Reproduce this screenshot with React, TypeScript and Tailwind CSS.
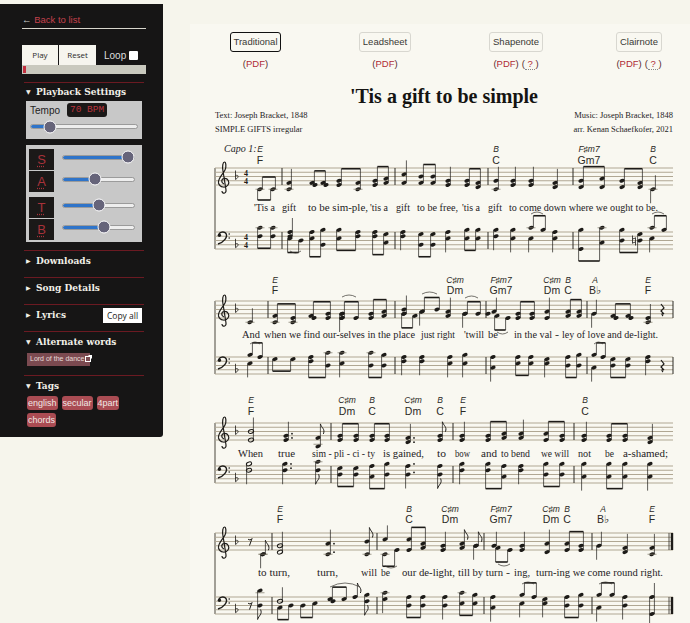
import React from 'react'

// quarter: [x, steps, stem, mods] mods: h half, . dotted, f flag
type Q = [number, number[], string, string?]
// beamed pair: [x1, steps1, x2, steps2, stem]
type P = [number, number[], number, number[], string]

interface Staff {
  t: number
  q: Q[]
  p: P[]
  bars: number[]
  rests?: [number, string][]
  natural?: [number, number][]
}

interface System {
  treble: Staff
  bass: Staff
  chordY: [number, number]
  chords: [number, string, string][]
  lyricY: number
  lyrics: [number, string, number][]
  slurs: [number, number, number, number][]
  end?: boolean
  final?: boolean
  time?: boolean
}

const systems: System[] = [
  {
    treble: {
      t: 168,
      bars: [282, 395, 488, 573],
      q: [[289, [7, 10], 'u'], [404, [3, 7], 'u'], [448, [6, 8], 'u'], [496, [6, 10], 'u'], [513, [6, 8], 'u'], [531, [6, 8], 'u'], [555, [7, 9], 'u'], [653, [10], 'b']],
      p: [[260, [10], 273, [10], 'b'], [312, [7, 8], 323, [7, 8], 'u'], [339, [6, 8], 358, [7, 10], 'u'], [375, [6, 8], 386, [5, 7], 'u'], [421, [4, 7], 433, [4, 7], 'u'], [467, [6, 8], 478, [7, 9], 'u'], [581, [6, 9], 602, [5, 9], 'u'], [622, [6, 9], 640, [7, 9], 'u']],
    },
    bass: {
      t: 232,
      bars: [282, 395, 488, 573],
      q: [[290, [0, 2], 'u'], [403, [0, 2], 'd'], [448, [0, 3], 'd'], [496, [-1, 2], 'd'], [513, [-1, 3], 'd'], [531, [3], 'd'], [555, [0, 3], 'd'], [652, [3], 'd']],
      p: [[260, [-2, 2], 273, [-2, 2], 'd'], [290, [3], 301, [4], 'd'], [312, [0, 3], 323, [-1, 6], 'd'], [339, [-1, 3], 358, [0, 2], 'd'], [375, [0, 2], 386, [1, 5], 'd'], [421, [1, 6], 433, [1, 6], 'd'], [467, [-1, 3], 478, [-1, 3], 'd'], [531, [-2], 543, [-1], 'u'], [581, [-1, 8], 602, [-2, 5], 'd'], [622, [-1, 4], 640, [1, 4], 'd'], [652, [-2], 664, [-1], 'u']],
      natural: [[634, 4]],
    },
    chordY: [152, 164],
    chords: [[260, 'E', 'F'], [496, 'B', 'C'], [589, 'F♯m7', 'Gm7'], [653, 'B', 'C']],
    lyricY: 211,
    lyrics: [[254, "'Tis a", 21], [282, 'gift', 14], [308, 'to be sim-ple,', 60], [370, "'tis a", 18], [396, 'gift', 14], [417, 'to be free,', 41], [462, "'tis a", 18], [488, 'gift', 14], [509, 'to come down where we ought to be.', 149]],
    slurs: [[290, 301, 251, 4], [531, 543, 214, -4], [652, 664, 214, -4]],
    time: true,
  },
  {
    treble: {
      t: 301,
      bars: [268, 395, 486, 587],
      rests: [[662, 'q']],
      q: [[250, [10], 'u'], [342, [6, 8], 'd'], [404, [4, 6], 'u'], [422, [5], 'd'], [448, [5, 7], 'u'], [465, [6], 'd'], [488, [6], ''], [494, [5], 'u'], [547, [5, 8], 'u'], [594, [6], 'b'], [648, [8, 10], 'u']],
      p: [[275, [7, 10], 293, [8, 10], 'u'], [311, [7, 8], 328, [6, 8], 'u'], [342, [6, 8], 356, [8], 'u'], [371, [6, 8], 384, [5, 7], 'u'], [404, [6], 415, [7], 'd'], [422, [5], 437, [4], 'u'], [465, [6], 478, [6], 'u'], [497, [7], 508, [8], 'd'], [518, [6, 8], 532, [6, 8], 'u'], [568, [5, 7], 579, [5, 7], 'u'], [613, [7, 8], 628, [7, 8], 'u']],
    },
    bass: {
      t: 357,
      bars: [268, 395, 486, 587],
      rests: [[662, 'q']],
      q: [[250, [3], 'd'], [342, [-2, 3], 'd'], [404, [0, 2], 'd'], [422, [0, 2], 'd'], [450, [0, 3], 'd'], [465, [-1, 3], 'd'], [493, [0, 5], 'd'], [547, [1, 3], 'd'], [594, [5], 'd'], [648, [0, 2], 'd']],
      p: [[250, [-1], 260, [0], 'u'], [275, [1], 293, [1], 'd'], [311, [0, 2], 328, [-2, 4], 'd'], [371, [-2, 4], 384, [-1, 4], 'd'], [518, [0, 3], 531, [0, 3], 'd'], [568, [0, 4], 579, [-1, 4], 'd'], [594, [-1], 603, [0], 'u'], [613, [1, 4], 628, [1, 4], 'd']],
    },
    chordY: [283, 294],
    chords: [[275, 'E', 'F'], [455, 'C♯m', 'Dm'], [501, 'F♯m7', 'Gm7'], [552, 'C♯m', 'Dm'], [568, 'B', 'C'], [595, 'A', 'B♭'], [648, 'E', 'F']],
    lyricY: 338,
    lyrics: [[242, 'And', 18], [264, 'when we find our-selves in the place', 151], [421, 'just right', 34], [464, "'twill", 20], [488, 'be', 10], [514, 'in the val', 38], [555, '-', 4], [562, 'ley of love and de-light.', 96]],
    slurs: [[342, 356, 297, -4], [422, 437, 294, -4], [465, 478, 298, -4], [497, 508, 332, 4], [250, 260, 344, -4], [594, 603, 344, -4]],
    end: true,
  },
  {
    treble: {
      t: 423,
      bars: [331, 453, 574],
      q: [[251, [4, 8], 'u', 'h'], [286, [6, 8], 'u', '.'], [318, [7, 11], 'u', 'f'], [408, [7, 9], 'u', '.'], [440, [6, 8], 'u', 'f'], [462, [6, 8], 'u'], [521, [5, 7], 'u'], [584, [6, 8], 'u'], [650, [7, 9], 'u']],
      p: [[340, [6, 8], 356, [6, 8], 'u'], [372, [6, 8], 387, [6, 8], 'u'], [488, [6, 8], 504, [5, 7], 'u'], [546, [5, 8], 562, [6, 8], 'u'], [609, [6, 8], 625, [6, 8], 'u']],
    },
    bass: {
      t: 466,
      bars: [331, 453, 574],
      q: [[249, [-1, 2], 'd', 'h'], [285, [-1, 2], 'd', '.'], [318, [-2, 2], 'd', 'f'], [408, [0, 4], 'd', '.'], [440, [0, 4], 'd', 'f'], [462, [-1, 2], 'd'], [521, [0, 2], 'd'], [584, [-1, 5], 'd'], [650, [-1, 5], 'd']],
      p: [[340, [1, 4], 356, [1, 4], 'd'], [372, [0, 5], 387, [-1, 4], 'd'], [488, [-1, 2], 504, [0, 5], 'd'], [546, [-1, 4], 562, [-1, 4], 'd'], [609, [-1, 5], 625, [-1, 5], 'd']],
    },
    chordY: [403, 415],
    chords: [[251, 'E', 'F'], [347, 'C♯m', 'Dm'], [372, 'B', 'C'], [413, 'C♯m', 'Dm'], [440, 'B', 'C'], [463, 'E', 'F'], [585, 'B', 'C']],
    lyricY: 457,
    lyrics: [[238, 'When', 25], [278, 'true', 17], [312, 'sim - pli - ci - ty', 63], [383, 'is gained,', 41], [437, 'to', 9], [455, 'bow', 15], [481, 'and', 16], [501, 'to bend', 29], [541, 'we will', 28], [578, 'not', 13], [605, 'be', 9], [623, 'a-shamed;', 45]],
    slurs: [],
  },
  {
    treble: {
      t: 533,
      bars: [272, 377, 484, 592],
      rests: [[250, 'e']],
      q: [[263, [10], 'u', 'f'], [263, [10], 'd'], [280, [6, 9], 'u', 'h'], [328, [5, 10], 'u', '.'], [367, [4, 10], 'u', 'f'], [385, [3], 'u'], [443, [6, 8], 'u'], [462, [5, 7], 'u', 'f'], [476, [6], 'u', 'f'], [476, [6], 'd'], [494, [6], 'u'], [522, [6, 8], 'u'], [547, [5, 9], 'u'], [599, [6], 'b'], [625, [7, 9], 'u'], [652, [7, 10], 'u']],
      p: [[385, [10], 397, [8], 'd'], [409, [3, 8], 423, [5, 7], 'u'], [498, [7], 510, [8], 'd'], [567, [5, 8], 581, [6, 8], 'u']],
    },
    bass: {
      t: 597,
      bars: [272, 377, 484, 592],
      rests: [[250, 'e']],
      q: [[260, [-3, 4], 'd', 'f'], [280, [2], 'u', 'h'], [355, [0], 'u', 'f'], [367, [-1, 2], 'd', 'f'], [385, [-2, 1], 'd'], [445, [0, 4], 'd'], [493, [0, 5], 'd'], [522, [3], 'd'], [545, [1, 3], 'd'], [599, [5], 'd'], [625, [0, 4], 'd'], [652, [0, 8], 'b']],
      p: [[280, [5], 291, [4], 'd'], [303, [4], 315, [3], 'd'], [330, [1, 2], 344, [1], 'u'], [409, [0, 4], 423, [0, 4], 'd'], [462, [-2, 3], 475, [-1, 3], 'd'], [522, [-1], 534, [0], 'u'], [567, [0, 4], 581, [-1, 4], 'd'], [599, [-1], 612, [-1], 'u']],
    },
    chordY: [512, 523],
    chords: [[280, 'E', 'F'], [409, 'B', 'C'], [450, 'C♯m', 'Dm'], [501, 'F♯m7', 'Gm7'], [551, 'C♯m', 'Dm'], [567, 'B', 'C'], [603, 'A', 'B♭'], [652, 'E', 'F']],
    lyricY: 576,
    lyrics: [[258, 'to turn,', 32], [317, 'turn,', 21], [361, 'will', 16], [381, 'be', 9], [402, 'our de-light,', 53], [458, 'till by turn', 45], [506, '-', 4], [514, 'ing,', 16], [536, 'turn-ing we come round right.', 127]],
    slurs: [[385, 397, 566, 4], [498, 510, 564, 4], [330, 360, 587, -8], [522, 534, 584, -4], [599, 612, 584, -4]],
    final: true,
  },
]

const ink = '#1d1b18'
const LS = 2.125
const y = (t: number, s: number) => t + s * LS

const Head = ({ x, cy, hollow }: { x: number; cy: number; hollow?: boolean }) => (
  <ellipse
    cx={x}
    cy={cy}
    rx={2.7}
    ry={1.8}
    transform={`rotate(-20 ${x} ${cy})`}
    fill={hollow ? 'none' : ink}
    stroke={hollow ? ink : 'none'}
    strokeWidth={hollow ? 1 : 0}
  />
)

const Heads = ({ x, t, steps, hollow }: { x: number; t: number; steps: number[]; hollow?: boolean }) => (
  <>
    {steps.map((s, i) => {
      const shift = i > 0 && Math.abs(s - steps[i - 1]) <= 1 ? 3 : 0
      return <Head key={i} x={x + shift} cy={y(t, s)} hollow={hollow} />
    })}
    {steps
      .filter(s => s >= 10 || s <= -2)
      .map((s, i) => (
        <line key={i} x1={x - 4.5} x2={x + 4.5} y1={y(t, Math.abs(s % 2) === 1 ? s + (s > 0 ? -1 : 1) : s)} y2={y(t, Math.abs(s % 2) === 1 ? s + (s > 0 ? -1 : 1) : s)} stroke="#7a7466" strokeWidth={0.7} />
      ))}
  </>
)

const Stem = ({ x, t, steps, dir, tip }: { x: number; t: number; steps: number[]; dir: string; tip?: number }) => {
  const top = y(t, Math.min(...steps))
  const bot = y(t, Math.max(...steps))
  return dir === 'u' ? (
    <line x1={x + 2.4} x2={x + 2.4} y1={bot} y2={tip ?? top - 14} stroke={ink} strokeWidth={0.7} />
  ) : (
    <line x1={x - 2.4} x2={x - 2.4} y1={top} y2={tip ?? bot + 14} stroke={ink} strokeWidth={0.7} />
  )
}

const Pair = ({ p, t }: { p: P; t: number }) => {
  const [x1, s1, x2, s2, dir] = p
  const tip =
    dir === 'u'
      ? Math.min(y(t, Math.min(...s1)), y(t, Math.min(...s2))) - 12
      : Math.max(y(t, Math.max(...s1)), y(t, Math.max(...s2))) + 12
  const dirs = dir === 'b' ? ['u', 'd'] : [dir]
  const bothTip = (d: string) => (dir === 'b' ? (d === 'u' ? t + 9 : t + 32) : tip)
  return (
    <>
      <Heads x={x1} t={t} steps={s1} />
      <Heads x={x2} t={t} steps={s2} />
      {dirs.map(d => (
        <g key={d}>
          <Stem x={x1} t={t} steps={s1} dir={d} tip={bothTip(d)} />
          <Stem x={x2} t={t} steps={s2} dir={d} tip={bothTip(d)} />
          <line x1={x1 + (d === 'u' ? 2.4 : -2.4)} x2={x2 + (d === 'u' ? 2.4 : -2.4)} y1={bothTip(d)} y2={bothTip(d)} stroke={ink} strokeWidth={1.6} />
        </g>
      ))}
    </>
  )
}

const Quarter = ({ q, t }: { q: Q; t: number }) => {
  const [x, steps, dir, mods = ''] = q
  const hollow = mods.includes('h')
  const dirs = dir === 'b' ? ['u', 'd'] : dir ? [dir] : []
  return (
    <>
      <Heads x={x} t={t} steps={steps} hollow={hollow} />
      {dirs.map(d => (
        <Stem key={d} x={x} t={t} steps={steps} dir={d} />
      ))}
      {mods.includes('.') && steps.map((s, i) => <circle key={i} cx={x + 6} cy={y(t, s % 2 ? s : s - 1)} r={0.9} fill={ink} />)}
      {mods.includes('f') &&
        (dir === 'u' ? (
          <path d={`M${x + 2.4} ${y(t, Math.min(...steps)) - 14} c1 4 5 5 3 10`} fill="none" stroke={ink} strokeWidth={1} />
        ) : (
          <path d={`M${x - 2.4} ${y(t, Math.max(...steps)) + 14} c1 -4 5 -5 3 -10`} fill="none" stroke={ink} strokeWidth={1} />
        ))}
    </>
  )
}

const StaffView = ({ s, clef, sys }: { s: Staff; clef: 'g' | 'f'; sys: System }) => {
  const t = s.t
  return (
    <g>
      {[0, 1, 2, 3, 4].map(i => (
        <line key={i} x1={215} x2={673} y1={t + i * 4.25} y2={t + i * 4.25} stroke="#b0a793" strokeWidth={1} />
      ))}
      {clef === 'g' ? (
        <g transform={`translate(223 ${t})`}>
          <path d="M1 16 C-2 15 -2 11 1 10.5 C5 10 7 14 5 17 C3 20 -3 20 -4.5 15 C-5.5 11 0 6 2 2 C3.5 -1 3 -6 1.5 -6 C0 -6 -1 -2 0 3 L3 22 C3.5 26 -1 26 -1 23" fill="none" stroke={ink} strokeWidth={1.2} />
        </g>
      ) : (
        <g transform={`translate(223 ${t})`}>
          <path d="M-4 3 C-4 0 1 -1 3 1.5 C5 5 1 10 -5 12" fill="none" stroke={ink} strokeWidth={1.4} />
          <circle cx={-3.6} cy={3.2} r={1.7} fill={ink} />
          <circle cx={6.2} cy={2} r={0.8} fill={ink} />
          <circle cx={6.2} cy={6} r={0.8} fill={ink} />
        </g>
      )}
      <path
        transform={`translate(235.5 ${y(t, clef === 'g' ? 4 : 6)})`}
        d="M0 -6 L0 3 C3.5 1 3.5 -2 0 -1"
        fill="none"
        stroke={ink}
        strokeWidth={0.8}
      />
      {sys.time && (
        <g fontFamily="'Liberation Serif', serif" fontWeight={700} fontSize={8} fill={ink} textAnchor="middle">
          <text x={246} y={t + 7.6}>4</text>
          <text x={246} y={t + 16.2}>4</text>
        </g>
      )}
      {s.bars.map(b => (
        <line key={b} x1={b} x2={b} y1={t} y2={t + 17} stroke="#2d2a25" strokeWidth={1} />
      ))}
      {sys.end && <line x1={673} x2={673} y1={t} y2={t + 17} stroke="#2d2a25" strokeWidth={1} />}
      {sys.final && (
        <>
          <line x1={669} x2={669} y1={t} y2={t + 17} stroke="#2d2a25" strokeWidth={0.8} />
          <line x1={672} x2={672} y1={t} y2={t + 17} stroke={ink} strokeWidth={2.4} />
        </>
      )}
      {s.rests?.map(([x, kind], i) =>
        kind === 'q' ? (
          <path key={i} d={`M${x - 1} ${t + 3} l3 4 l-3 3 l3 3 c-2 -1 -3 0 -1 2`} fill="none" stroke={ink} strokeWidth={1.2} />
        ) : (
          <path key={i} d={`M${x - 2} ${t + 6} c1 1.5 3 1 4 -0.5 l-2.5 7`} fill="none" stroke={ink} strokeWidth={1} />
        ),
      )}
      {s.natural?.map(([x, st], i) => (
        <path key={i} d={`M${x - 1.5} ${y(t, st) - 5} v8 M${x + 1.5} ${y(t, st) - 3} v8 M${x - 1.5} ${y(t, st) - 1.5} l3 -1 M${x - 1.5} ${y(t, st) + 2.5} l3 -1`} fill="none" stroke={ink} strokeWidth={0.8} />
      ))}
      {s.q.map((q, i) => (
        <Quarter key={i} q={q} t={t} />
      ))}
      {s.p.map((p, i) => (
        <Pair key={i} p={p} t={t} />
      ))}
    </g>
  )
}

const SystemView = ({ sys }: { sys: System }) => (
  <g>
    <line x1={215} x2={215} y1={sys.treble.t} y2={sys.bass.t + 17} stroke="#4b463c" strokeWidth={1} />
    <StaffView s={sys.treble} clef="g" sys={sys} />
    <StaffView s={sys.bass} clef="f" sys={sys} />
    {sys.chords.map(([x, capo, main], i) => (
      <g key={i} fontFamily="'Liberation Sans', sans-serif" textAnchor="middle" fill="#2b2925">
        <text x={x} y={sys.chordY[0]} fontSize={8.5} fontStyle="italic">{capo}</text>
        <text x={x} y={sys.chordY[1]} fontSize={10.5}>{main}</text>
      </g>
    ))}
    {sys.lyrics.map(([x, word, w], i) => (
      <text key={i} x={x} y={sys.lyricY} fontFamily="'Liberation Serif', serif" fontSize={10.5} fill="#24221e" textLength={w} lengthAdjust="spacingAndGlyphs">
        {word}
      </text>
    ))}
    {sys.slurs.map(([x1, x2, sy, bend], i) => (
      <path key={i} d={`M${x1} ${sy} Q${(x1 + x2) / 2} ${sy + bend} ${x2} ${sy}`} fill="none" stroke="#3a3630" strokeWidth={0.7} />
    ))}
  </g>
)

const Slider = ({ value }: { value: number }) => (
  <div className="relative h-[3px] rounded-full bg-[#eeeeee] outline outline-1 outline-[#9b9b9b]">
    <div className="h-full rounded-full bg-[#2f74c9]" style={{ width: `${value}%` }} />
    <div
      className="absolute top-1/2 h-[13px] w-[13px] -translate-x-1/2 -translate-y-1/2 rounded-full border border-white bg-[#66647a]"
      style={{ left: `${value}%` }}
    />
  </div>
)

const Voice = ({ letter, value, className }: { letter: string; value: number; className: string }) => (
  <div className={`flex items-center ${className}`}>
    <div className="flex h-[21px] w-[25px] items-center justify-center bg-[#1b1918] text-[13px] text-[#a8323a] underline decoration-dotted decoration-[#a8323a] underline-offset-2">
      {letter}
    </div>
    <div className="ml-[9px] w-[71px] pb-[5px]">
      <Slider value={value} />
    </div>
  </div>
)

const SectionTitle = ({ open, children }: { open?: boolean; children: React.ReactNode }) => (
  <div className="flex items-center font-['DejaVu_Serif'] text-[9px] font-bold leading-[12px] text-[#f1efe7]">
    <span className="mr-[4px] w-[6px] font-['DejaVu_Sans'] text-[6px]">{open ? '▼' : '▶'}</span>
    {children}
  </div>
)

const Rule = ({ className }: { className?: string }) => <div className={`ml-[24px] h-px w-[120px] bg-[#6b1a22] ${className ?? ''}`} />

const Tag = ({ children }: { children: React.ReactNode }) => (
  <span className="rounded-[3px] bg-[#aa4c53] px-px py-px text-[9px] leading-[12px] text-[#f0e8e4]">{children}</span>
)

const Sidebar = () => (
  <aside className="mt-[4px] h-[433px] w-[163px] shrink-0 rounded-br-[3px] bg-[#161515] font-['Liberation_Sans'] text-[#eee]">
    <div className="ml-[22px] w-[124px] border-b border-[#d8d6cc] pb-[3px] pt-[10px] text-[9.5px] leading-[11px] text-[#c4414c]">
      <span className="text-[#ccc]">←</span> Back to list
    </div>
    <div className="ml-[22px] mt-[16px] flex h-[20px] items-center font-['Open_Sans'] text-[8px] text-[#2a2a2a]">
      <button className="h-full w-[36px] bg-[#f6f5ee]">Play</button>
      <button className="ml-px h-full w-[37px] bg-[#f6f5ee]">Reset</button>
      <span className="ml-[8px] font-['Liberation_Sans'] text-[10px] text-[#ddd]">Loop</span>
      <span className="ml-[3px] h-[9px] w-[9px] rounded-[1px] bg-white" />
    </div>
    <div className="ml-[22px] h-[9px] w-[124px] bg-[#c9c9be] pl-px pt-[1px]">
      <div className="h-[7px] w-[3px] bg-[#c2303f]" />
    </div>
    <Rule className="mt-[8px]" />
    <div className="ml-[26px] mt-[3px]">
      <SectionTitle open>Playback Settings</SectionTitle>
    </div>
    <div className="ml-[26px] mt-[3px] h-[38px] w-[116px] bg-[#c8c8c8] px-[5px] pt-[2px]">
      <div className="-ml-px flex h-[14px] items-center text-[#222]">
        <span className="text-[10px]">Tempo</span>
        <span className="ml-[7px] rounded-[3px] bg-[#1b1918] px-[3px] py-px font-['Liberation_Mono'] text-[9.5px] leading-[12px] text-[#b8333c]">70 BPM</span>
      </div>
      <div className="mt-[8px]">
        <Slider value={18} />
      </div>
    </div>
    <div className="ml-[26px] mt-[6px] h-[97px] w-[116px] bg-[#c8c8c8] pl-[3px] pt-[4px]">
      <Voice letter="S" value={91} className="" />
      <Voice letter="A" value={45} className="mt-px" />
      <Voice letter="T" value={51} className="mt-[5px]" />
      <Voice letter="B" value={58} className="mt-px" />
    </div>
    <Rule className="mt-[8px]" />
    <div className="ml-[26px] mt-[4px] h-[22px]">
      <SectionTitle>Downloads</SectionTitle>
    </div>
    <Rule />
    <div className="ml-[26px] mt-[4px] h-[22px]">
      <SectionTitle>Song Details</SectionTitle>
    </div>
    <Rule />
    <div className="ml-[26px] mt-[3px] flex h-[23px] w-[116px] items-start justify-between">
      <div className="mt-[1px]">
        <SectionTitle>Lyrics</SectionTitle>
      </div>
      <button className="h-[15px] w-[39px] bg-white font-['Open_Sans'] text-[8.5px] leading-[15px] text-[#222]">Copy all</button>
    </div>
    <Rule />
    <div className="ml-[26px] mt-[4px]">
      <SectionTitle open>Alternate words</SectionTitle>
    </div>
    <div className="ml-[27px] mt-[5px] flex h-[13px] w-[63px] items-center whitespace-nowrap bg-[#7b4a50] pl-[3px] text-[7px] text-[#e8dcd8]">
      Lord of the dance
      <svg width="7" height="7" viewBox="0 0 7 7" className="mb-[3px] shrink-0">
        <rect x="0.5" y="1.5" width="5" height="5" fill="none" stroke="#fff" strokeWidth="1" />
        <path d="M3 0h4v4z" fill="#fff" />
      </svg>
    </div>
    <Rule className="mt-[9px]" />
    <div className="ml-[26px] mt-[4px]">
      <SectionTitle open>Tags</SectionTitle>
    </div>
    <div className="ml-[27px] mt-[4px] flex w-[110px] flex-wrap gap-x-[4px] gap-y-[3px]">
      <Tag>english</Tag>
      <Tag>secular</Tag>
      <Tag>4part</Tag>
      <Tag>chords</Tag>
    </div>
  </aside>
)

const tabs = [
  { name: 'Traditional', active: true, help: false, ml: '', w: 'w-[51px]' },
  { name: 'Leadsheet', active: false, help: false, ml: 'ml-[78px]', w: 'w-[52px]' },
  { name: 'Shapenote', active: false, help: true, ml: 'ml-[78px]', w: 'w-[54px]' },
  { name: 'Clairnote', active: false, help: true, ml: 'ml-[73px]', w: 'w-[46px]' },
]

const Tabs = () => (
  <div className="flex pl-[40px] pt-[8px] font-['Liberation_Sans'] text-[#3a3835]">
    {tabs.map(tab => (
      <div key={tab.name} className={`flex flex-col items-center ${tab.ml} ${tab.w}`}>
        <button className={`h-[20px] w-full whitespace-nowrap rounded-[3px] border text-[9.5px] ${tab.active ? 'border-[#111]' : 'border-[#d8d7d0]'}`}>{tab.name}</button>
        <div className="mt-[6px] whitespace-nowrap text-[9.5px] leading-[11px] text-[#5a2c30]">
          (<span className="text-[#b02a35]">PDF</span>)
          {tab.help && (
            <span className="ml-[3px]">
              (<span className="border-b border-dotted border-[#888] text-[#b02a35]"> ? </span>)
            </span>
          )}
        </div>
      </div>
    ))}
  </div>
)

const Sheet = () => (
  <main className="ml-[27px] mt-[24px] min-w-0 flex-1 overflow-hidden bg-[#f9f8f1]">
    <Tabs />
    <h1 className="mt-[16px] pl-[160px] font-['Liberation_Serif'] text-[20px] font-bold leading-[23px] text-[#151412]">'Tis a gift to be simple</h1>
    <div className="flex justify-between pl-[25px] pr-[17px] font-['Liberation_Serif'] text-[8.5px] leading-[14px] text-[#24221e]">
      <div>
        <div>Text: Joseph Bracket, 1848</div>
        <div>SIMPLE GIFTS irregular</div>
      </div>
      <div className="text-right">
        <div>Music: Joseph Bracket, 1848</div>
        <div>arr. Kenan Schaefkofer, 2021</div>
      </div>
    </div>
    <svg viewBox="205 140 485 483" className="ml-[15px] mt-[4px] block h-[483px] w-[485px] shrink-0">
      <text x={224} y={152} fontFamily="'Liberation Serif', serif" fontStyle="italic" fontSize={10} fill="#24221e">Capo 1:</text>
      {systems.map((sys, i) => (
        <SystemView key={i} sys={sys} />
      ))}
    </svg>
  </main>
)

const App = () => (
  <div className="flex h-[623px] w-[690px] items-start overflow-hidden bg-[#f6f5ec]">
    <Sidebar />
    <Sheet />
  </div>
)

export default App
